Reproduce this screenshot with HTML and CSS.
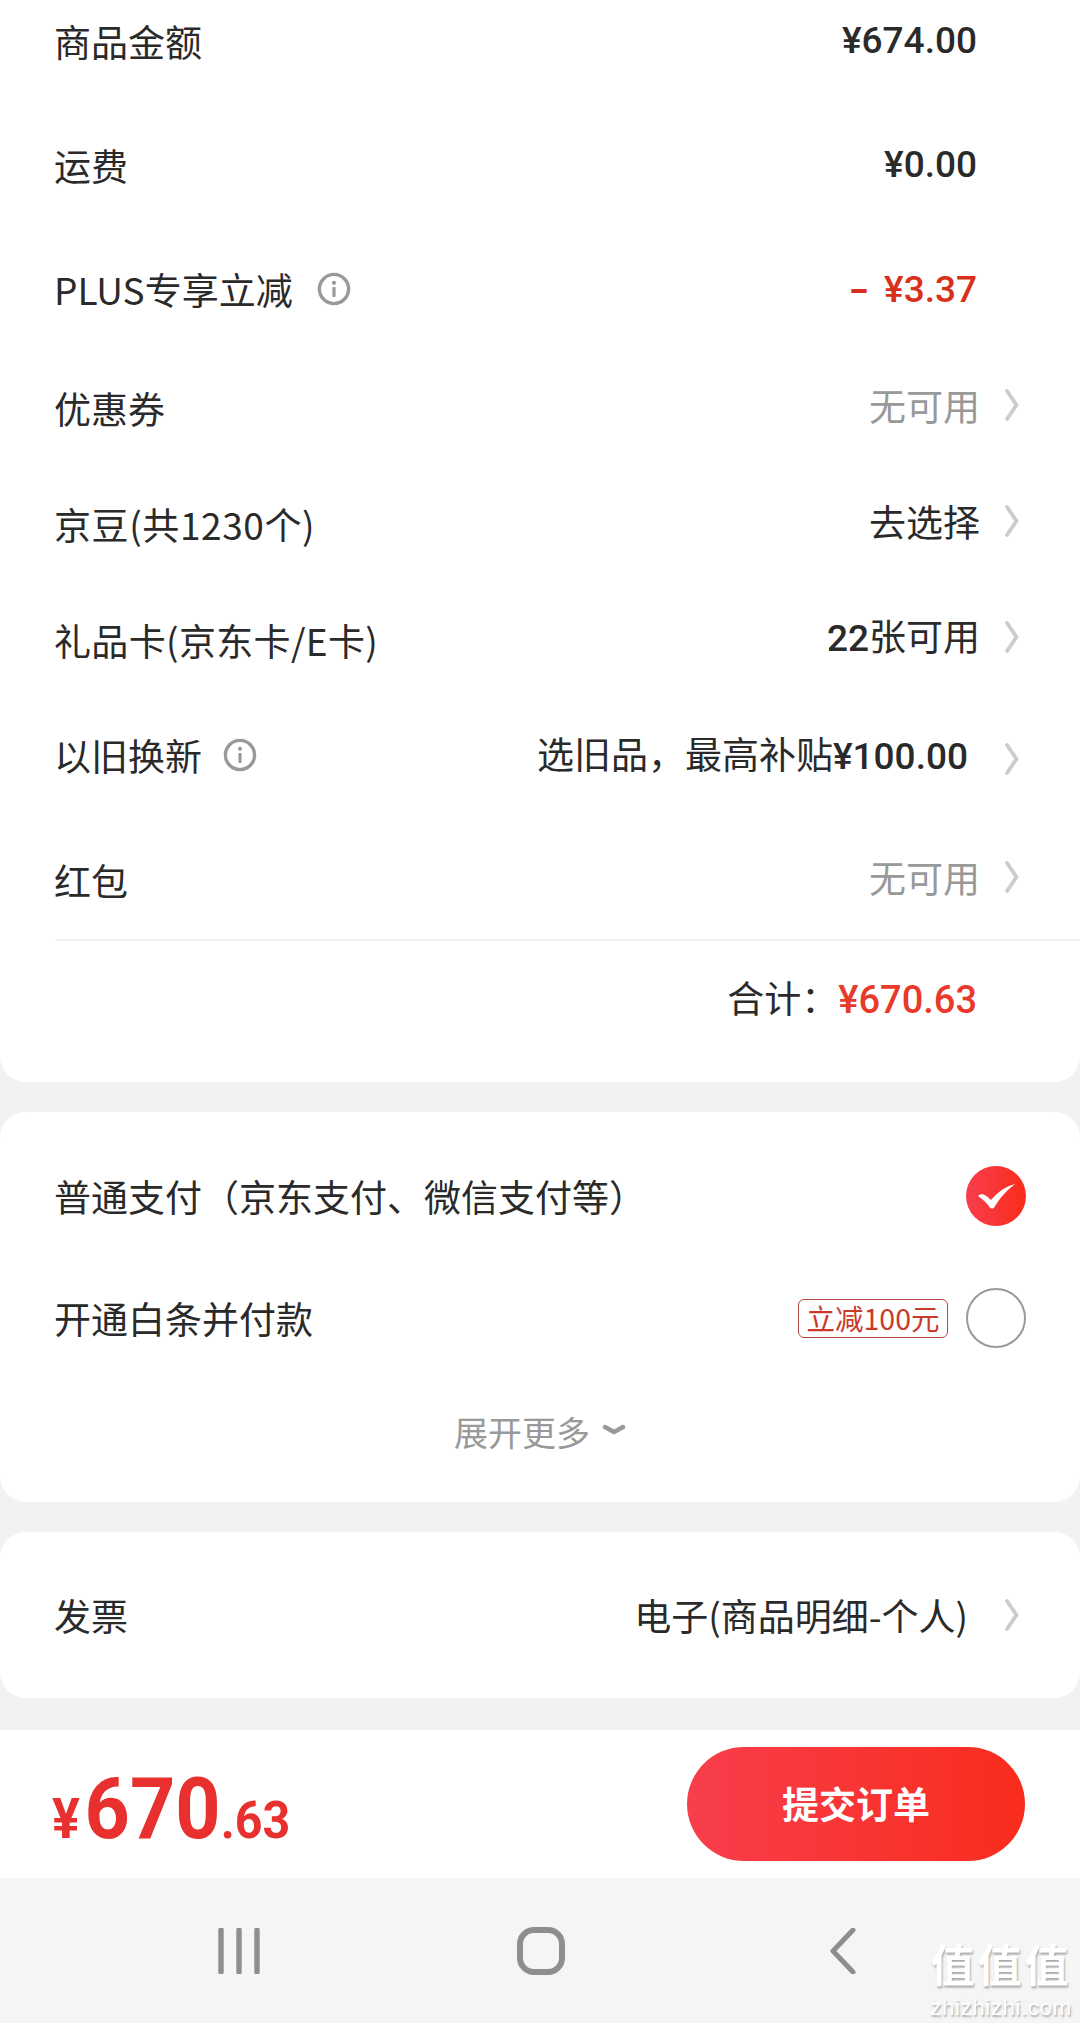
FILE: index.html
```html
<!DOCTYPE html>
<html lang="zh-CN">
<head>
<meta charset="utf-8">
<title>确认订单</title>
<link rel="stylesheet" href="styles.css">
</head>
<body>
<svg class="defs" width="0" height="0">
  <symbol id="chev" viewBox="0 0 16 32"><path d="M3 2 L12.5 16 L3 30" fill="none" stroke="#cccccc" stroke-width="3.800" stroke-linecap="round" stroke-linejoin="round"/></symbol>
  <symbol id="info" viewBox="0 0 34 34"><circle cx="17" cy="17" r="14.6" fill="none" stroke="#999" stroke-width="3.400"/><circle cx="17" cy="10.8" r="2.100" fill="#999"/><rect x="15.400" y="15" width="3.200" height="10" rx="1" fill="#999"/></symbol>
</svg>

<main class="scroll">
  <section class="card card-fees">
    <div class="row row-tall"><span class="label">商品金额</span><span class="val num">¥674.00</span></div>
    <div class="row row-tall"><span class="label">运费</span><span class="val num">¥0.00</span></div>
    <div class="row row-tall row-tuck"><span class="label">PLUS专享立减<svg class="info"><use href="#info"/></svg></span><span class="val num red"><span class="dash">-</span>¥3.37</span></div>
    <div class="row"><span class="label low">优惠券</span><span class="val muted">无可用</span><svg class="chev"><use href="#chev"/></svg></div>
    <div class="row"><span class="label low loose">京豆(共1230个)</span><span class="val">去选择</span><svg class="chev"><use href="#chev"/></svg></div>
    <div class="row"><span class="label low loose-sm">礼品卡(京东卡/E卡)</span><span class="val"><b class="num">22</b>张可用</span><svg class="chev"><use href="#chev"/></svg></div>
    <div class="row row-mid"><span class="label">以旧换新<svg class="info info-near"><use href="#info"/></svg></span><span class="val inset">选旧品，最高补贴<b class="num">¥100.00</b></span><svg class="chev chev-low"><use href="#chev"/></svg></div>
    <div class="row row-tall"><span class="label low">红包</span><span class="val muted">无可用</span><svg class="chev"><use href="#chev"/></svg></div>
    <div class="total"><span class="total-label">合计：</span><span class="num total-price">¥670.63</span></div>
  </section>

  <section class="card card-pay">
    <div class="row row-tall">
      <span class="label">普通支付（京东支付、微信支付等）</span>
      <svg class="radio" viewBox="0 0 60 60">
        <defs><linearGradient id="checked"><stop offset="0" stop-color="#f73e4c"/><stop offset="1" stop-color="#f92c1c"/></linearGradient></defs>
        <circle cx="30" cy="30" r="30" fill="url(#checked)"/>
        <path d="M12 30 C15 27 19 28 25 34 C31 27 38 21 49 18 C40 25 34 32 28.500 41 C27 43 25 43 23.500 41 C20 36 16 33 12 30 Z" fill="#fff"/>
      </svg>
    </div>
    <div class="row row-tall row-up">
      <span class="label">开通白条并付款</span>
      <span class="badge">立减100元</span>
      <span class="radio radio-off"></span>
    </div>
    <div class="more">展开更多<svg class="more-arrow" viewBox="0 0 24 12"><path d="M3 3 L12 8 L21 3" fill="none" stroke="#999" stroke-width="4.500" stroke-linecap="round" stroke-linejoin="round"/></svg></div>
  </section>

  <section class="card card-invoice">
    <div class="row row-invoice"><span class="label">发票</span><span class="val inset">电子(商品明细-个人)</span><svg class="chev"><use href="#chev"/></svg></div>
  </section>
</main>

<footer class="bar">
  <div class="price"><span class="price-yen">¥</span><span class="price-int">670</span><span class="price-dec">.63</span></div>
  <div class="submit">提交订单</div>
</footer>

<nav class="sysnav">
  <svg class="nav-recent" viewBox="0 0 42 46"><path d="M3 2V44M21 2V44M39 2V44" stroke="#8e8e8e" stroke-width="5.400" stroke-linecap="round"/></svg>
  <svg class="nav-home" viewBox="0 0 48 48"><rect x="3" y="3" width="42" height="42" rx="14" fill="none" stroke="#8e8e8e" stroke-width="6"/></svg>
  <svg class="nav-back" viewBox="0 0 26 46"><path d="M23 2 L3 23 L23 44" fill="none" stroke="#8e8e8e" stroke-width="5" stroke-linecap="round" stroke-linejoin="round"/></svg>
  <div class="mark"><div class="mark-cn">值值值</div><div class="mark-en">zhizhizhi.com</div></div>
</nav>
</body>
</html>
```

FILE: styles.css
```css
* {
  box-sizing: border-box;
}
html, body {
  margin: 0;
  height: 100%;
}
body {
  height: 2023px;
  display: flex;
  flex-direction: column;
  overflow: hidden;
  background: #f2f2f2;
  color: #2a2a2a;
  font-family: "Noto Sans CJK SC", sans-serif;
  font-size: 37px;
}
.defs {
  position: absolute;
}

/* scrolled content, first row is cut at the top */
.scroll {
  height: 1730px;
  overflow: hidden;
}
.card {
  background: #fff;
  border-radius: 26px;
  margin-bottom: 30px;
}
.card-fees {
  margin-top: -21px;
  border-radius: 0 0 26px 26px;
}
.card-pay {
  padding: 22px 0 20px;
}
.card-pay .row {
  padding-right: 54px;
}

.row {
  display: flex;
  align-items: center;
  height: 116px;
  padding: 0 60px 0 54px;
}
.row-tall {
  height: 124px;
}
.row-mid {
  height: 120px;
}
.row-tuck {
  margin-bottom: -4px;
}
.row-up {
  margin-top: -2px;
}
.row-invoice {
  height: 166px;
}
.label {
  display: flex;
  align-items: center;
  margin-right: auto;
  line-height: 50px;
}
.low {
  padding-top: 5px;
}
.loose {
  letter-spacing: .6px;
}
.loose-sm {
  letter-spacing: .35px;
}
.val {
  line-height: 50px;
  white-space: nowrap;
}
.inset {
  margin-right: 9px;
}
.num {
  font-family: Roboto, sans-serif;
  font-weight: 500;
}
.val.num {
  margin-right: 43px;
  padding-bottom: 1px;
}
.val.red {
  padding: 2px 0 0;
}
.muted {
  color: #999;
}
.red {
  color: #d9301c;
}
.dash {
  display: inline-block;
  margin-right: 17px;
  font-weight: 700;
  transform: scaleX(1.500);
}
.info {
  width: 34px;
  height: 34px;
  margin-left: 24px;
}
.info-near {
  margin-left: 21px;
}
.chev {
  width: 16px;
  height: 32px;
  margin-left: 24px;
  flex: none;
}
.inset + .chev {
  margin-left: 27px;
}
.chev-low {
  margin-top: 8px;
}

.total {
  display: flex;
  justify-content: flex-end;
  align-items: center;
  height: 143px;
  margin-left: 55px;
  padding: 0 103px 24px 0;
  border-top: 2px solid #f1f1f1;
}
.total-label {
  padding-bottom: 6px;
}
.total-price {
  color: #e8392a;
  font-size: 38px;
}

.radio {
  width: 60px;
  height: 60px;
  flex: none;
}
.radio-off {
  border: 2.500px solid #999;
  border-radius: 50%;
}
.badge {
  width: 150px;
  height: 39px;
  margin-right: 18px;
  border: 1px solid #b5483a;
  border-radius: 6px;
  color: #c83a2a;
  font-size: 28.500px;
  line-height: 36px;
  text-align: center;
  white-space: nowrap;
}
.more {
  display: flex;
  justify-content: center;
  align-items: center;
  height: 102px;
  color: #999;
  font-size: 34px;
}
.more-arrow {
  width: 24px;
  height: 12px;
  margin: -3px 0 0 12px;
}

.bar {
  display: flex;
  align-items: center;
  justify-content: space-between;
  height: 148px;
  padding: 0 55px 0 52px;
  background: #fff;
}
.price {
  display: flex;
  align-items: baseline;
  margin-top: 10px;
  color: #e8302e;
  font-family: Roboto, sans-serif;
  font-weight: 700;
  transform: scaleX(.93);
  transform-origin: left center;
}
.price-yen {
  margin-right: 5px;
  font-size: 56px;
}
.price-int {
  font-size: 85px;
  line-height: 100px;
}
.price-dec {
  font-size: 52px;
}
.submit {
  width: 338px;
  height: 114px;
  border-radius: 57px;
  background: linear-gradient(to right, #f73e4c, #f92c1c);
  color: #fff;
  font-weight: 700;
  line-height: 112px;
  text-align: center;
}

.sysnav {
  position: relative;
  flex: 1;
  display: flex;
  align-items: center;
  background: #f5f5f5;
  padding-left: 218px;
}
.nav-recent {
  width: 42px;
  height: 46px;
}
.nav-home {
  width: 48px;
  height: 48px;
  margin-left: 257px;
}
.nav-back {
  width: 26px;
  height: 46px;
  margin-left: 265px;
}
.mark {
  position: absolute;
  left: 930px;
  top: 57px;
  width: 142px;
  color: #fff;
  text-align: center;
  text-shadow: 1px 2px 2px #a8a8a8;
}
.mark-cn {
  font-size: 44px;
  font-weight: 700;
  letter-spacing: 3px;
  line-height: 56px;
}
.mark-en {
  margin-top: 5px;
  font-family: "Liberation Sans", sans-serif;
  font-size: 22.500px;
  letter-spacing: .5px;
  line-height: 24px;
}
```
